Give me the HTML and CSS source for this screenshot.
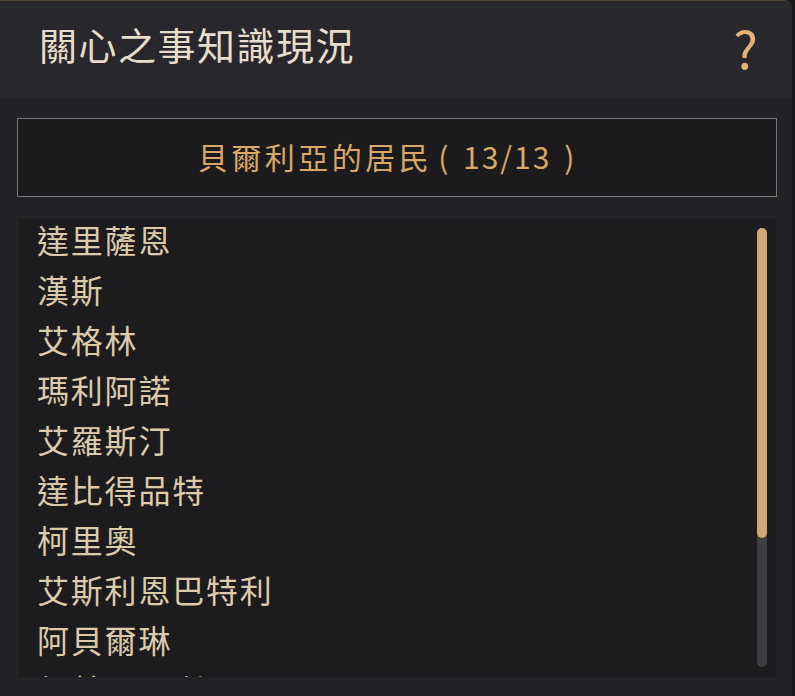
FILE: index.html
```html
<html>
    <head>
        <title>關心之事知識現況</title>
        <meta name="viewport" content="width=device-width" />
        <link rel="stylesheet" href="styles.css">
    </head>
    <body>
        <div class="panel">
            <div class="header">
                <h1>關心之事知識現況</h1>
                <span class="help">?</span>
            </div>

            <div class="content">
                <div class="category">貝爾利亞的居民 <span class="count">(&nbsp;13/13&nbsp;)</span></div>

                <div class="list">
                    <ul>
                        <li>達里薩恩</li>
                        <li>漢斯</li>
                        <li>艾格林</li>
                        <li>瑪利阿諾</li>
                        <li>艾羅斯汀</li>
                        <li>達比得品特</li>
                        <li>柯里奧</li>
                        <li>艾斯利恩巴特利</li>
                        <li>阿貝爾琳</li>
                        <li>凱蒂亞阿利</li>
                        <li>艾可</li>
                        <li>布魯諾</li>
                        <li>羅茲</li>
                    </ul>
                    <div class="scrollbar">
                        <div class="thumb"></div>
                    </div>
                </div>
            </div>
        </div>
    </body>
</html>
```

FILE: styles.css
```css
html {
    font-size: 16px;
}
body {
    margin: 0;
    background: #19191b;
    font-family: "Noto Sans CJK TC", "Noto Sans", sans-serif;
}

.panel {
    width: 792px;
    height: 696px;
    background: #232327;
    border-top: 1px solid #4e4430;
    border-top-right-radius: 8px;
    overflow: hidden;
    box-sizing: border-box;
}

.header {
    height: 97px;
    background: #28282c;
    display: flex;
    align-items: center;
    justify-content: space-between;
    padding: 0 34px 0 39px;
}

h1 {
    margin: 0 0 12px;
    font-weight: 400;
    font-size: 38px;
    letter-spacing: 1.5px;
    color: #e7ddcc;
}

.help {
    font-size: 52px;
    font-weight: 400;
    color: #e2b374;
    margin-bottom: 6px;
}

.content {
    padding: 20px 15px 0 17px;
}

.category {
    width: 738px;
    height: 73px;
    border: 1px solid #7b7a7a;
    background: #1b1b1d;
    color: #d9a866;
    font-size: 30px;
    letter-spacing: 3.5px;
    display: flex;
    align-items: center;
    justify-content: center;
    padding: 0 20px 4px 0;
}

.count {
    margin-left: 6px;
    letter-spacing: 2px;
    word-spacing: 4px;
}

.list {
    position: relative;
    margin: 22px 0 0 1px;
    width: 758px;
    height: 458px;
    background: #1c1c1f;
    overflow: hidden;
}

.list ul {
    list-style: none;
    margin: -5px 0 0;
    padding: 0 0 0 19px;
}

.list li {
    height: 50px;
    line-height: 50px;
    font-size: 32px;
    letter-spacing: 1.8px;
    color: #dccbab;
}

.scrollbar {
    position: absolute;
    top: 9px;
    right: 9px;
    bottom: 10px;
    width: 10px;
    border-radius: 5px;
    background: #3e3d42;
}

.thumb {
    height: 310px;
    border-radius: 5px;
    background: #d1a874;
}
```
